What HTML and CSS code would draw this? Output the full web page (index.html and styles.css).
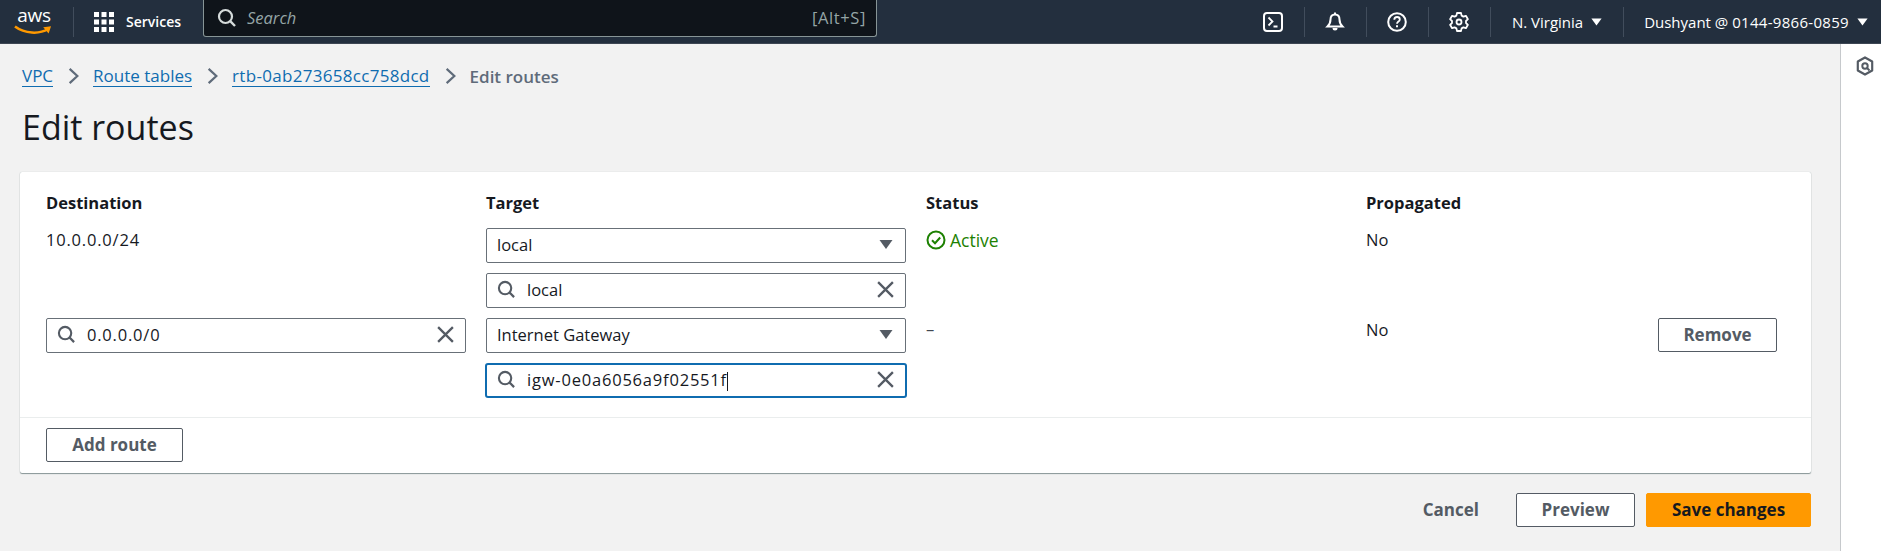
FILE: index.html
```html
<!DOCTYPE html>
<html lang="en">
<head>
    <meta charset="UTF-8">
    <meta name="viewport" content="width=device-width, initial-scale=1.0">
    <title>Edit routes</title>
    <link rel="stylesheet" href="styles.css">
</head>
<body>
    <svg class="icon-defs" aria-hidden="true">
        <symbol id="i-search" viewBox="0 0 20 20"><circle cx="8.500" cy="8.500" r="6.500" fill="none" stroke="currentColor" stroke-width="2.200"/><path d="M13.200 13.200 18 18" fill="none" stroke="currentColor" stroke-width="2.400"/></symbol>
        <symbol id="i-close" viewBox="0 0 18 18"><path d="M2 2 16 16M16 2 2 16" fill="none" stroke="currentColor" stroke-width="2.200"/></symbol>
        <symbol id="i-caret" viewBox="0 0 14 10"><path d="M0.500 0.500h13L7 9.500z" fill="currentColor"/></symbol>
    </svg>

    <header class="topbar">
        <div class="logo">
            <span class="logo-text">aws</span>
            <svg class="logo-smile" viewBox="0 0 40 11"><path d="M1 1.500C11 9 26 9.500 35 4" fill="none" stroke="#ff9900" stroke-width="2.600"/><path d="M30 2.200 38 1.200 35.500 8.500" fill="#ff9900"/></svg>
        </div>
        <span class="sep sep-logo"></span>
        <div class="services">
            <svg class="grid-icon" viewBox="0 0 20 20"><path d="M0 0h5v5H0zM7.500 0h5v5h-5zM15 0h5v5h-5zM0 7.500h5v5H0zM7.500 7.500h5v5h-5zM15 7.500h5v5h-5zM0 15h5v5H0zM7.500 15h5v5h-5zM15 15h5v5h-5z" fill="#fff"/></svg>
            <span>Services</span>
        </div>
        <div class="top-search">
            <svg class="top-search-icon"><use href="#i-search"/></svg>
            <span class="top-search-text">Search</span>
            <span class="top-search-key">[Alt+S]</span>
        </div>
        <div class="top-right">
            <span class="top-icon">
                <svg viewBox="0 0 20 20" width="20" height="20"><rect x="1" y="1" width="18" height="18" rx="3" fill="none" stroke="#fff" stroke-width="2"/><path d="M5.500 5.500 9.500 9.500 5.500 13.500M10.500 14.500h4" fill="none" stroke="#fff" stroke-width="1.800"/></svg>
            </span>
            <span class="sep"></span>
            <span class="top-icon">
                <svg viewBox="0 0 20 20" width="20" height="20"><path d="M10 2.500c-3 0-4.500 2.300-4.500 5 0 3.500-.5 4.500-3 7h15c-2.500-2.500-3-3.500-3-7 0-2.700-1.500-5-4.500-5z" fill="none" stroke="#fff" stroke-width="2"/><path d="M10 .5v2" stroke="#fff" stroke-width="2"/><path d="M7.500 16a2.500 2.500 0 0 0 5 0z" fill="#fff"/></svg>
            </span>
            <span class="sep"></span>
            <span class="top-icon">
                <svg viewBox="0 0 20 20" width="20" height="20"><circle cx="10" cy="10" r="8.800" fill="none" stroke="#fff" stroke-width="2"/><path d="M7.300 7.700c0-1.700 1.200-2.700 2.800-2.700s2.700 1 2.700 2.400c0 2-2.800 2.200-2.800 4.300" fill="none" stroke="#fff" stroke-width="1.800"/><path d="M9 13.300h2v2H9z" fill="#fff"/></svg>
            </span>
            <span class="sep"></span>
            <span class="top-icon">
                <svg viewBox="0 0 20 20" width="20" height="20"><path d="M8 1h4l.6 2.600 1.800 1 2.500-.8 2 3.400-1.900 1.800v2l1.900 1.800-2 3.400-2.500-.8-1.800 1-.6 2.600H8l-.6-2.600-1.800-1-2.500.8-2-3.400L3 11V9L1.100 7.200l2-3.400 2.500.8 1.800-1z" fill="none" stroke="#fff" stroke-width="1.800" stroke-linejoin="round"/><circle cx="10" cy="10" r="2.500" fill="none" stroke="#fff" stroke-width="1.800"/></svg>
            </span>
            <span class="sep"></span>
            <span class="top-menu top-region">N. Virginia <svg class="top-caret"><use href="#i-caret"/></svg></span>
            <span class="sep"></span>
            <span class="top-menu top-user"><span>Dushyant @ <span class="num-wide">0144-9866-0859</span></span> <svg class="top-caret"><use href="#i-caret"/></svg></span>
        </div>
    </header>

    <div class="layout">
        <main class="content">
            <nav class="crumbs">
                <a class="crumb-link">VPC</a>
                <svg class="crumb-arrow" viewBox="0 0 10 16"><path d="M1.500 1.500 8.500 8 1.500 14.500" fill="none" stroke="currentColor" stroke-width="2"/></svg>
                <a class="crumb-link">Route tables</a>
                <svg class="crumb-arrow" viewBox="0 0 10 16"><path d="M1.500 1.500 8.500 8 1.500 14.500" fill="none" stroke="currentColor" stroke-width="2"/></svg>
                <a class="crumb-link crumb-id">rtb-0ab273658cc758dcd</a>
                <svg class="crumb-arrow" viewBox="0 0 10 16"><path d="M1.500 1.500 8.500 8 1.500 14.500" fill="none" stroke="currentColor" stroke-width="2"/></svg>
                <span class="crumb-current">Edit routes</span>
            </nav>

            <h1>Edit routes</h1>

            <section class="card">
                <div class="routes">
                    <div class="col-head">Destination</div>
                    <div class="col-head">Target</div>
                    <div class="col-head">Status</div>
                    <div class="col-head">Propagated</div>

                    <div class="cell-text num-wide">10.0.0.0/24</div>
                    <div class="stack">
                        <div class="field">
                            <span class="field-value">local</span>
                            <svg class="field-caret"><use href="#i-caret"/></svg>
                        </div>
                        <div class="field">
                            <svg class="field-search"><use href="#i-search"/></svg>
                            <span class="field-value">local</span>
                            <svg class="field-close"><use href="#i-close"/></svg>
                        </div>
                    </div>
                    <div class="cell-text status-active">
                        <svg class="status-icon" viewBox="0 0 20 20"><circle cx="10" cy="10" r="8.500" fill="none" stroke="currentColor" stroke-width="2"/><path d="M6 10.300 9 13.200 14.200 7.500" fill="none" stroke="currentColor" stroke-width="2"/></svg>
                        <span>Active</span>
                    </div>
                    <div class="cell-text">No</div>

                    <div class="field">
                        <svg class="field-search"><use href="#i-search"/></svg>
                        <span class="field-value num-wide">0.0.0.0/0</span>
                        <svg class="field-close"><use href="#i-close"/></svg>
                    </div>
                    <div class="stack">
                        <div class="field">
                            <span class="field-value">Internet Gateway</span>
                            <svg class="field-caret"><use href="#i-caret"/></svg>
                        </div>
                        <div class="field field-focus">
                            <svg class="field-search"><use href="#i-search"/></svg>
                            <span class="field-value num-wide">igw-0e0a6056a9f02551f<span class="cursor"></span></span>
                            <svg class="field-close"><use href="#i-close"/></svg>
                        </div>
                    </div>
                    <div class="cell-text cell-dash">–</div>
                    <div class="cell-last">
                        <span class="cell-text">No</span>
                        <button class="btn btn-remove">Remove</button>
                    </div>
                </div>
                <div class="card-foot">
                    <button class="btn btn-add">Add route</button>
                </div>
            </section>

            <div class="actions">
                <button class="btn-link">Cancel</button>
                <button class="btn btn-preview">Preview</button>
                <button class="btn btn-save">Save changes</button>
            </div>
        </main>

        <aside class="side-panel">
            <svg viewBox="0 0 20 22" width="18" height="20"><path d="M10 1.500 18 6v10l-8 4.500L2 16V6z" fill="none" stroke="#545b64" stroke-width="2.400" stroke-linejoin="round"/><circle cx="10" cy="11" r="3" fill="none" stroke="#545b64" stroke-width="2.200"/><path d="M12 13l3 3" stroke="#545b64" stroke-width="2.200"/></svg>
        </aside>
    </div>
</body>
</html>
```

FILE: styles.css
```css
* {
    box-sizing: border-box;
}

html, body {
    height: 100%;
}

body {
    margin: 0;
    font-family: "Open Sans", "Noto Sans", sans-serif;
    font-size: 16.5px;
    color: #16191f;
    background: #f2f2f2;
    overflow: hidden;
}

.icon-defs {
    display: none;
}

/* digits run wider in the original font */
.num-wide {
    letter-spacing: 0.8px;
}

/* Top bar */
.topbar {
    display: flex;
    align-items: center;
    height: 44px;
    background: #232f3e;
    color: #fff;
    border-bottom: 1px solid #3d4653;
}

.logo {
    position: relative;
    width: 40px;
    height: 36px;
    margin-left: 14px;
}

.logo-text {
    display: block;
    font-size: 19px;
    font-weight: 400;
    line-height: 22px;
    letter-spacing: -0.3px;
    text-align: center;
}

.logo-smile {
    display: block;
    width: 39px;
    height: 11px;
    margin-top: -1px;
}

.sep {
    width: 1px;
    height: 30px;
    background: #414d5c;
}

.sep-logo {
    margin-left: 19px;
}

.services {
    display: flex;
    align-items: center;
    gap: 12px;
    margin-left: 20px;
    width: 109px;
    font-weight: 600;
    font-size: 14px;
}

.grid-icon {
    width: 20px;
    height: 20px;
}

.top-search {
    display: flex;
    align-items: center;
    width: 674px;
    height: 37px;
    margin-top: -7px;
    background: #0f141a;
    border: 1px solid #879596;
    border-top: none;
    border-radius: 0 0 3px 3px;
    padding: 0 10px 0 13px;
    color: #95a5a6;
}

.top-search-icon {
    width: 20px;
    height: 20px;
    color: #d5dbdb;
}

.top-search-text {
    margin-left: 10px;
    font-style: italic;
}

.top-search-key {
    margin-left: auto;
    font-size: 16.5px;
    letter-spacing: 0.6px;
}

.top-right {
    display: flex;
    align-items: center;
    margin-left: auto;
}

.top-icon {
    display: flex;
    justify-content: center;
    align-items: center;
    width: 61px;
}

.top-menu {
    display: flex;
    align-items: center;
    gap: 8px;
    font-size: 15px;
    white-space: nowrap;
}

.top-menu .num-wide {
    letter-spacing: 0.3px;
}

.top-region {
    padding: 0 21px;
}

.top-user {
    padding: 0 13px 0 20px;
}

.top-caret {
    width: 11px;
    height: 8px;
    color: #fff;
}

/* Page */
.layout {
    display: flex;
    height: calc(100% - 44px);
}

.content {
    flex: 1;
    padding: 0 29px 0 20px;
}

.side-panel {
    width: 41px;
    background: #fff;
    border-left: 1px solid #c6c9cc;
    padding: 12px 0 0 15px;
}

.crumbs {
    display: flex;
    align-items: center;
    height: 24px;
    margin-top: 20px;
    padding-left: 2px;
    font-size: 17px;
}

.crumb-link {
    color: #0f6cb0;
    border-bottom: 1px solid #0f6cb0;
    line-height: 21px;
}

.crumb-id {
    letter-spacing: 0.3px;
}

.crumb-arrow {
    width: 11px;
    height: 18px;
    margin: 0 14px 0 15px;
    color: #5f6b7a;
}

.crumb-current {
    color: #5f6b7a;
    font-weight: 600;
}

h1 {
    margin: 20px 0 0 2px;
    height: 38px;
    font-size: 34px;
    font-weight: 400;
    line-height: 38px;
    color: #16191f;
}

.card {
    margin-top: 26px;
    background: #fff;
    border-radius: 2px;
    box-shadow: 0 1px 1px 0 #879596, 0 0 1px 0 #aab7b8;
}

.routes {
    display: grid;
    grid-template-columns: repeat(4, 420px);
    column-gap: 20px;
    padding: 20px 25px 0 26px;
    height: 245px;
    grid-template-rows: 36px 90px 80px;
    row-gap: 0;
}

.col-head {
    font-weight: 700;
    line-height: 21px;
}

.cell-text {
    line-height: 22px;
    padding-top: 1px;
}

.cell-dash {
    padding-top: 0;
    color: #414750;
}

.cell-last {
    display: flex;
    justify-content: space-between;
    align-items: flex-start;
}

.stack {
    display: flex;
    flex-direction: column;
    gap: 10px;
}

.field {
    display: flex;
    align-items: center;
    height: 35px;
    background: #fff;
    border: 1px solid #687078;
    border-radius: 2px;
    padding: 0 10px 2px;
}

.field-focus {
    border: 2px solid #0f6cb0;
    border-radius: 3px;
    margin: 0 -1px;
    padding: 0 10px 2px;
    height: 35px;
}

.field-value {
    flex: 1;
    white-space: nowrap;
}

.cursor {
    display: inline-block;
    width: 1px;
    height: 19px;
    background: #16191f;
    vertical-align: -5px;
}

.field-search {
    width: 19px;
    height: 19px;
    margin-right: 11px;
    color: #545b64;
}

.field-close {
    width: 19px;
    height: 19px;
    color: #545b64;
}

.field-caret {
    width: 14px;
    height: 11px;
    margin-right: 2px;
    color: #545b64;
}

.status-active {
    display: flex;
    align-items: center;
    align-self: start;
    gap: 4px;
    color: #1d8102;
    font-size: 17.500px;
}

.status-icon {
    width: 20px;
    height: 20px;
}

.card-foot {
    border-top: 1px solid #eaeded;
    padding: 10px 26px 11px;
}

.btn {
    display: block;
    height: 34px;
    padding: 0 0 2px;
    background: #fff;
    border: 1px solid #545b64;
    border-radius: 2px;
    font: 700 17px "Open Sans", sans-serif;
    color: #545b64;
}

.btn-remove {
    width: 119px;
    margin-right: 9px;
}

.btn-add {
    width: 137px;
}

.actions {
    display: flex;
    justify-content: flex-end;
    align-items: center;
    margin-top: 20px;
}

.btn-link {
    background: none;
    border: none;
    padding: 0 0 2px;
    font: 700 17px "Open Sans", sans-serif;
    color: #545b64;
    margin-right: 37px;
}

.btn-preview {
    width: 119px;
    margin-right: 11px;
}

.btn-save {
    width: 165px;
    background: #ff9900;
    border-color: #ff9900;
    color: #16191f;
}
```
